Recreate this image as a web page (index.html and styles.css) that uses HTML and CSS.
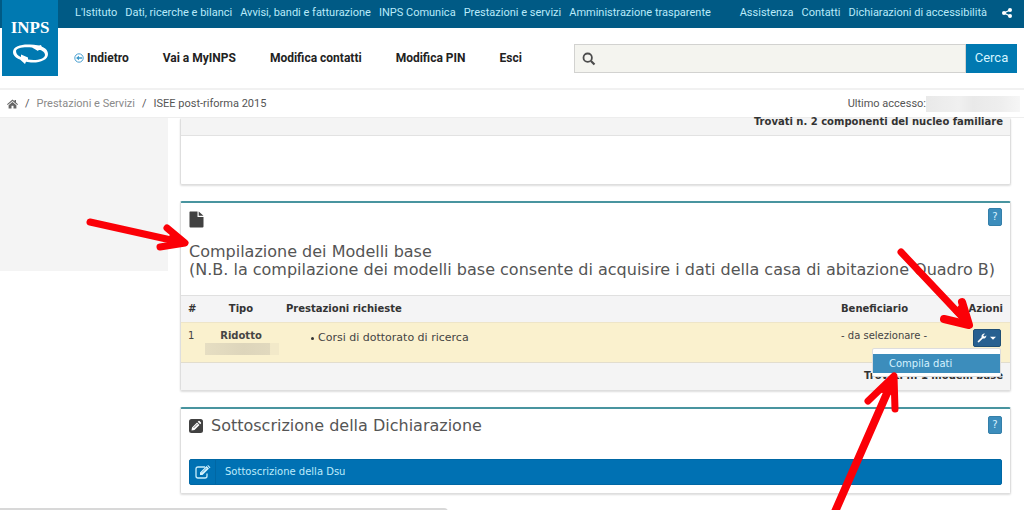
FILE: index.html
```html
<!DOCTYPE html>
<html lang="it">
<head>
<meta charset="utf-8">
<meta name="viewport" content="width=device-width, initial-scale=1">
<title>ISEE post-riforma 2015 - INPS</title>
<link rel="stylesheet" href="styles.css">
</head>
<body>
<header class="site-header">
  <a class="logo" href="#" aria-label="INPS">
    <svg class="logo-art" viewBox="0 0 56 76" aria-hidden="true">
      <path fill="#fff" fill-rule="evenodd" d="M11 52C11 46 20 44 28 44.500C39 45 46 48 46 54C46 60 38 63 29 62.500L24 61.800L23 64L18 59.500C14 58 11 55.500 11 52ZM14 51C14 54 16 56 19 57L19 54.500L26 57.500L26 59.500C34 61 43 59 43 55C43 52 40 50.500 37 49.500L36 51L30 47.500C22 46.500 14 48 14 51Z"/>
      <path fill="#fff" d="M35 46L39 45L41 50L35 50Z"/>
    </svg>
    <span class="logo-name">INPS</span>
  </a>
  <nav class="topbar" aria-label="Istituzionale">
    <div class="top-links">
      <a href="#">L'Istituto</a><a href="#">Dati, ricerche e bilanci</a><a href="#">Avvisi, bandi e fatturazione</a><a href="#">INPS Comunica</a><a href="#">Prestazioni e servizi</a><a href="#">Amministrazione trasparente</a>
    </div>
    <div class="top-links">
      <a href="#">Assistenza</a><a href="#">Contatti</a><a href="#">Dichiarazioni di accessibilità</a>
      <a class="share" href="#" aria-label="Condividi"><svg width="10" height="10" viewBox="0 0 10 10"><path d="M8 2L2 5L8 8" fill="none" stroke="#fff" stroke-width="1.300"/><g fill="#fff"><circle cx="8" cy="2" r="2"/><circle cx="2" cy="5" r="2"/><circle cx="8" cy="8" r="2"/></g></svg></a>
    </div>
  </nav>
  <div class="mainbar">
    <nav class="main-links" aria-label="Servizio">
      <a class="back" href="#"><svg width="10" height="10" viewBox="0 0 10 10" aria-hidden="true"><circle cx="5" cy="5" r="4.200" fill="none" stroke="#4a9fd0"/><path d="M2 5L5 2.800V4.200H8V5.800H5V7.200Z" fill="#3c9acb"/></svg>Indietro</a>
      <a href="#">Vai a MyINPS</a><a href="#">Modifica contatti</a><a href="#">Modifica PIN</a><a href="#">Esci</a>
    </nav>
    <form class="search">
      <svg class="search-icon" width="14" height="14" viewBox="0 0 14 14" aria-hidden="true"><circle cx="5.700" cy="5.700" r="4.200" fill="none" stroke="#4c4c4c" stroke-width="1.800"/><path d="M9 9L12.500 12.500" stroke="#4c4c4c" stroke-width="2.200"/></svg>
      <input class="search-box" type="text" aria-label="Cerca nel sito">
      <button class="search-button" type="button">Cerca</button>
    </form>
  </div>
</header>
<div class="crumbs">
  <nav class="trail" aria-label="Percorso">
    <a class="home" href="#" aria-label="Home"><svg width="11" height="10" viewBox="0 0 11 10"><path fill="#666" d="M5.500 0.500L7.500 2.200V1H9V3.500L11 5.200L10.300 6L5.500 2L0.700 6L0 5.200ZM5.500 2.900L9.400 6.200V9.500H6.500V6.700H4.500V9.500H1.600V6.200Z"/></svg></a>
    <span>/</span><a href="#">Prestazioni e Servizi</a><span>/</span><span class="current">ISEE post-riforma 2015</span>
  </nav>
  <p class="access">Ultimo accesso:<span class="redacted redacted-date"></span></p>
</div>
<div class="page">
  <aside class="sidebar"></aside>
  <main class="content">
    <section class="panel panel-scrolled">
      <p class="total">Trovati n. 2 componenti del nucleo familiare</p>
      <div class="blank"></div>
    </section>
    <section class="panel">
      <div class="panel-head panel-head-tall">
        <div>
          <svg class="doc-icon" width="15" height="17" viewBox="0 0 15 17" aria-hidden="true"><path fill="#414141" d="M1 .500H8.500V6H14.500V15.500Q14.500 16.500 13.500 16.500H1.500Q.500 16.500 .500 15.500V1ZM9.700 .500L14.500 4.800H9.700Z"/></svg>
          <h2>Compilazione dei Modelli base<br>(N.B. la compilazione dei modelli base consente di acquisire i dati della casa di abitazione Quadro B)</h2>
        </div>
        <button class="help" type="button">?</button>
      </div>
      <table class="models">
        <thead>
          <tr><th class="col-num">#</th><th class="col-type">Tipo</th><th>Prestazioni richieste</th><th class="col-who">Beneficiario</th><th class="col-actions">Azioni</th></tr>
        </thead>
        <tbody>
          <tr>
            <td>1</td>
            <td class="type"><strong>Ridotto</strong><span class="redacted redacted-type"></span></td>
            <td><ul class="services"><li>Corsi di dottorato di ricerca</li></ul></td>
            <td class="who">- da selezionare -</td>
            <td class="actions">
              <div class="dropdown">
                <button class="tool" type="button" aria-label="Azioni" aria-expanded="true"><svg width="20" height="10" viewBox="0 0 20 10"><path fill="#fff" d="M.700 8.300L4.500 4.500Q4 2 5.800 1Q7 .300 8 .800L6.300 2.200L6.800 3.200L8 3.500L9.300 2.300Q9.500 4 8.300 5Q7.200 5.800 5.800 5.500L2 9.300Q.500 9.800 .700 8.300Z"/><path fill="#fff" d="M13 3.800H19L16 6.800Z"/></svg></button>
                <div class="menu"><a href="#">Compila dati</a></div>
              </div>
            </td>
          </tr>
        </tbody>
        <tfoot><tr><td colspan="5">Trovati n. 1 modelli base</td></tr></tfoot>
      </table>
    </section>
    <section class="panel">
      <div class="panel-head">
        <h2 class="with-icon"><svg width="14" height="14" viewBox="0 0 14 14" aria-hidden="true"><rect width="14" height="14" rx="2.500" fill="#414141"/><path fill="#fff" d="M2.500 11.500L3 8.500L8 3.500L10.500 6L5.500 11ZM8.700 2.800L9.500 2Q10 1.700 10.500 2L12 3.500Q12.300 4 12 4.500L11.200 5.300Z"/><path d="M4.500 9L8.500 5" stroke="#414141" stroke-width=".700"/></svg>Sottoscrizione della Dichiarazione</h2>
        <button class="help" type="button">?</button>
      </div>
      <button class="sign" type="button">
        <span class="sign-icon"><svg width="16" height="14" viewBox="0 0 16 14" aria-hidden="true"><path d="M10 2H3Q1 2 1 4V11Q1 13 3 13H10Q12 13 12 11V8.500" fill="none" stroke="#c9eefb" stroke-width="1.300"/><path fill="#d5f3fd" d="M5 10V7.500L11.500 1L14 3.500L7.500 10ZM12.200 .500Q13 -.200 13.600 .500L15 1.900Q15.600 2.500 15 3.100L14.700 3.300Z"/><path d="M7 7.500L11.500 3" stroke="#0071b3" stroke-width=".600"/></svg></span>
        <span class="sign-label">Sottoscrizione della Dsu</span>
      </button>
    </section>
  </main>
</div>
<div class="status"></div>
<svg class="arrows" width="1024" height="510" viewBox="0 0 1024 510" aria-hidden="true">
  <g fill="none" stroke="#fb0007" stroke-linecap="round" stroke-linejoin="round" stroke-width="7">
    <path d="M90 222L180 242"/><path d="M167 228L185 243L160 247"/><path fill="#fb0007" stroke-width="2" d="M168 238L174 233L185 243L168 244Z"/>
    <path d="M901 252L966 321"/><path stroke-width="8" d="M962 302L969 325L944 319"/><path fill="#fb0007" stroke-width="3" d="M955 312L962 304L969 325Z"/>
    <path stroke-width="8" d="M834 514L891 384"/><path stroke-width="7" d="M868 401L894 376L895 409"/><path fill="#fb0007" stroke-width="3" d="M881 391L894 376L894 394Z"/>
  </g>
</svg>
</body>
</html>
```
FILE: styles.css
```css
* { box-sizing: border-box; }
body {
  margin: 0;
  min-height: 100vh;
  position: relative;
  overflow: hidden;
  background: #fff;
  color: #444;
  font: 10px/14px "DejaVu Sans", sans-serif;
}
a { color: inherit; text-decoration: none; }
h2, p, ul { margin: 0; padding: 0; }
button, input { font: inherit; border: 0; border-radius: 0; padding: 0; }
svg { display: block; flex: none; }

.site-header, .crumbs { font-family: Roboto, sans-serif; white-space: nowrap; }
.site-header { position: relative; border-bottom: 2px solid #f1f1f1; }
.logo { position: absolute; left: 2px; top: 0; width: 56px; height: 76px; background: #0079b1; color: #fff; }
.logo-art { width: 56px; height: 76px; }
.logo-name {
  position: absolute;
  left: 0;
  right: 0;
  top: 12px;
  text-align: center;
  font: 700 17px/32px "Liberation Serif", serif;
}
.topbar {
  display: flex;
  justify-content: space-between;
  align-items: center;
  height: 28px;
  padding: 0 12px 2px 75px;
  background: #005a85;
  color: #b9eafa;
  font-size: 11px;
}
.top-links { display: flex; align-items: center; gap: 8px; }
.share { margin-left: 7px; }
.mainbar { display: flex; align-items: center; justify-content: space-between; height: 60px; padding: 0 7px 0 74px; }
.main-links { display: flex; gap: 34px; color: #222; font-size: 12px; font-weight: 700; }
.back { display: flex; align-items: center; gap: 3px; }
.search { position: relative; display: flex; width: 443px; height: 29px; }
.search-icon { position: absolute; left: 8px; top: 8px; }
.search-box { flex: 1; min-width: 0; padding-left: 30px; border: 1px solid #d2d2d0; background: #f4f4ef; }
.search-button { width: 51px; background: #0079b1; color: #d5f4ff; font-size: 13px; }
.crumbs {
  display: flex;
  justify-content: space-between;
  align-items: center;
  height: 28px;
  padding: 0 4px 0 7px;
  border-bottom: 1px solid #eee;
  color: #555;
  font-size: 11px;
}
.trail { display: flex; align-items: center; gap: 7px; }
.trail a { color: #8a8a8a; }
.access { display: flex; align-items: center; }
.redacted { display: block; background: linear-gradient(90deg, #e9e9e9, #f0f0f0 35%, #e9e9e9 50%, #eee 80%, #f6f6f6); }
.redacted-date { width: 94px; height: 16px; }

.page { display: flex; gap: 12px; padding-right: 13px; }
.sidebar { flex: 0 0 168px; height: 153px; background: #f4f4f4; }
.content { flex: 1; min-width: 0; display: flex; flex-direction: column; gap: 16px; }
.panel {
  border: 1px solid #dedede;
  border-top: 2px solid #48949f;
  border-radius: 2px;
  box-shadow: 0 1px 2px #ddd;
}
.panel-scrolled { border-top: 0; }
.total { height: 18px; padding: 0 7px; border-bottom: 1px solid #e2e2e2; background: #f4f4f4; line-height: 8px; text-align: right; font-weight: 700; color: #333; }
.blank { height: 48px; }
.panel-head { display: flex; justify-content: space-between; padding: 7px 8px 0; }
.panel-head-tall { height: 92px; position: relative; padding-top: 8px; }
.panel-head-tall .help { position: absolute; right: 8px; top: 5px; }
h2 { font-size: 16px; font-weight: 400; line-height: 18px; color: #555; white-space: nowrap; }
.panel-head-tall h2 { padding-top: 15px; }
.with-icon { display: flex; align-items: center; gap: 8px; height: 20px; }
.help { width: 14px; height: 18px; border: 1px solid #347fa9; border-radius: 2px; background: #3c8dbc; color: #d7f2ff; line-height: 14px; }
.models { width: 100%; table-layout: fixed; border-collapse: collapse; }
.models th, .models td { padding: 0 7px; vertical-align: top; text-align: left; color: #333; }
.models th { height: 27px; border-top: 1px solid #e0e0e0; background: #f4f4f5; vertical-align: middle; }
.models tbody td { height: 40px; padding-top: 6px; border-top: 1px solid #eee5c8; border-bottom: 1px solid #e2ddcd; background: #faf1ce; color: #444; }
.models .col-num { width: 22px; padding-right: 0; }
.models .col-type { width: 76px; text-align: center; }
.models .col-who { width: 100px; }
.models .col-actions { width: 76px; text-align: right; }
.models .type { text-align: center; padding-left: 2px; padding-right: 2px; }
.redacted-type { width: 78px; height: 12px; background: linear-gradient(90deg, #e6dec2, #ddd5bb 50%, #e1d9be 83%, #f2e9c9 84%); }
.services { padding: 2px 0 0 32px; list-style: none; font-size: 11px; }
.services li { display: flex; align-items: center; gap: 4px; }
.services li::before { content: ""; width: 3px; height: 3px; margin-left: -7px; border-radius: 50%; background: #333; }
.models .who { white-space: nowrap; }
.dropdown { position: relative; display: flex; justify-content: flex-end; padding-right: 2px; }
.tool { display: flex; align-items: center; justify-content: center; width: 28px; height: 18px; border: 1px solid #1f4f75; border-radius: 2px; background: #286090; }
.menu { position: absolute; right: 2px; top: 19px; width: 129px; padding: 5px 0 3px; border: 1px solid #ddd; border-radius: 2px; background: #fff; }
.menu a { display: block; padding-left: 16px; line-height: 19px; background: #3c8dbc; color: #d5f2ff; }
.models tfoot td { height: 27px; background: #f4f4f4; text-align: right; vertical-align: middle; font-weight: 700; }
.sign { display: flex; align-items: stretch; width: calc(100% - 16px); height: 26px; margin: 23px 8px 8px; border: 1px solid #0067a4; border-radius: 2px; background: #0071b3; color: #bdebfb; text-align: left; }
.sign-icon { display: flex; align-items: center; justify-content: center; width: 26px; border-right: 1px solid #0067a4; }
.sign-label { padding-left: 9px; line-height: 24px; }
.status { position: fixed; left: -2px; bottom: -4px; width: 450px; height: 6px; border: 2px solid #d8d8d8; border-radius: 0 4px 0 0; background: #eee; }
.arrows { position: absolute; left: 0; top: 0; pointer-events: none; }
```
